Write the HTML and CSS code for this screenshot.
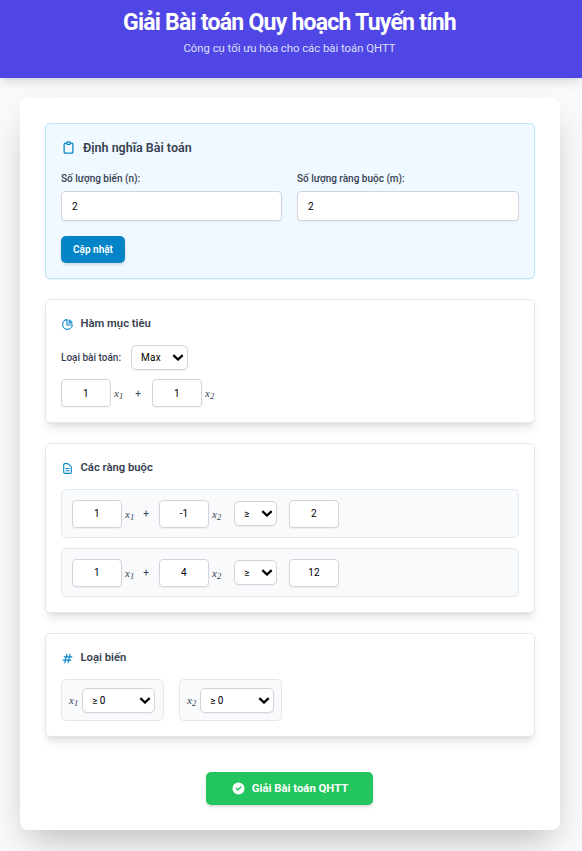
FILE: index.html
```html
<!DOCTYPE html>
<html lang="vi">
<head>
<meta charset="utf-8">
<title>Giải Bài toán Quy hoạch Tuyến tính</title>
<link rel="stylesheet" href="styles.css">
</head>
<body>
<svg width="0" height="0" class="defs">
  <symbol id="chevron" viewBox="0 0 10 6"><path d="M1 1l4 3.7L9 1" fill="none" stroke="#000" stroke-width="2"/></symbol>
</svg>
<header class="header">
  <h1 class="title">Giải Bài toán Quy hoạch Tuyến tính</h1>
  <p class="subtitle">Công cụ tối ưu hóa cho các bài toán QHTT</p>
</header>
<main class="card">
  <section class="panel panel-define">
    <h2 class="heading heading-lg">
      <svg class="icon icon-lg" viewBox="0 0 24 24"><path d="M9 5H7a2 2 0 00-2 2v12a2 2 0 002 2h10a2 2 0 002-2V7a2 2 0 00-2-2h-2M9 5a2 2 0 002 2h2a2 2 0 002-2M9 5a2 2 0 012-2h2a2 2 0 012 2"/></svg>
      <span>Định nghĩa Bài toán</span>
    </h2>
    <div class="fields">
      <label class="field"><span class="label">Số lượng biến (n):</span><input class="input input-wide" value="2"></label>
      <label class="field"><span class="label">Số lượng ràng buộc (m):</span><input class="input input-wide" value="2"></label>
    </div>
    <button class="btn-update">Cập nhật</button>
  </section>

  <section class="panel panel-objective">
    <h2 class="heading">
      <svg class="icon" viewBox="0 0 24 24"><path d="M11 3.055A9.001 9.001 0 1020.945 13H11V3.055z"/><path d="M20.488 9H15V3.512A9.025 9.025 0 0120.488 9z"/></svg>
      <span>Hàm mục tiêu</span>
    </h2>
    <div class="type-row">
      <span class="label">Loại bài toán:</span>
      <span class="select select-type"><select><option>Max</option></select><svg class="chevron"><use href="#chevron"/></svg></span>
    </div>
    <div class="terms">
      <input class="input input-num" value="1"><span class="var">x<sub>1</sub></span><span class="plus">+</span>
      <input class="input input-num" value="1"><span class="var">x<sub>2</sub></span>
    </div>
  </section>

  <section class="panel panel-constraints">
    <h2 class="heading">
      <svg class="icon" viewBox="0 0 24 24"><path d="M9 12h6m-6 4h6m2 5H7a2 2 0 01-2-2V5a2 2 0 012-2h5.586a1 1 0 01.707.293l5.414 5.414a1 1 0 01.293.707V19a2 2 0 01-2 2z"/></svg>
      <span>Các ràng buộc</span>
    </h2>
    <div class="constraint">
      <input class="input input-num" value="1"><span class="var">x<sub>1</sub></span><span class="plus">+</span>
      <input class="input input-num" value="-1"><span class="var">x<sub>2</sub></span>
      <span class="select select-op"><select><option>≥</option></select><svg class="chevron"><use href="#chevron"/></svg></span>
      <input class="input input-num" value="2">
    </div>
    <div class="constraint">
      <input class="input input-num" value="1"><span class="var">x<sub>1</sub></span><span class="plus">+</span>
      <input class="input input-num" value="4"><span class="var">x<sub>2</sub></span>
      <span class="select select-op"><select><option>≥</option></select><svg class="chevron"><use href="#chevron"/></svg></span>
      <input class="input input-num" value="12">
    </div>
  </section>

  <section class="panel panel-vars">
    <h2 class="heading">
      <svg class="icon" viewBox="0 0 24 24"><path d="M7 20l4-16m2 16l4-16M6 9h14M4 15h14"/></svg>
      <span>Loại biến</span>
    </h2>
    <div class="vars">
      <div class="var-box"><span class="var">x<sub>1</sub></span><span class="select select-var"><select><option>≥ 0</option></select><svg class="chevron"><use href="#chevron"/></svg></span></div>
      <div class="var-box"><span class="var">x<sub>2</sub></span><span class="select select-var"><select><option>≥ 0</option></select><svg class="chevron"><use href="#chevron"/></svg></span></div>
    </div>
  </section>

  <button class="btn-solve">
    <svg class="check" viewBox="0 0 20 20"><path fill-rule="evenodd" d="M10 18a8 8 0 100-16 8 8 0 000 16zm3.707-9.293a1 1 0 00-1.414-1.414L9 10.586 7.707 9.293a1 1 0 00-1.414 1.414l2 2a1 1 0 001.414 0l4-4z" clip-rule="evenodd"/></svg>
    <span>Giải Bài toán QHTT</span>
  </button>
</main>
</body>
</html>
```
FILE: styles.css
```css
* { box-sizing: border-box; }
html, body { height: 851px; overflow: hidden; }
body {
  margin: 0;
  background: #f9fafb;
  color: #374151;
  font-family: Roboto, "Liberation Sans", sans-serif;
  font-size: 10px;
}
.defs { position: absolute; }
h1, h2, p { margin: 0; }
input, select, button { font-family: inherit; font-size: 10px; margin: 0; }

.header {
  height: 78px;
  padding: 7px 3px 0 0;
  background: #4f46e5;
  color: #fff;
  text-align: center;
  box-shadow: 0 7px 10px -2px rgba(0,0,0,.1), 0 3px 4px -3px rgba(0,0,0,.1);
}
.title { font-size: 23px; line-height: 32px; font-weight: 700; letter-spacing: -0.76px; }
.subtitle { margin-top: 2px; font-size: 11.3px; line-height: 16px; color: #e0e7ff; opacity: .95; }

.card {
  display: flex;
  flex-direction: column;
  gap: 20px;
  width: 540px;
  height: 732px;
  margin: 20px 0 0 20px;
  padding: 25px;
  background: #fff;
  border-radius: 8px;
  box-shadow: 0 17px 34px -8px rgba(0,0,0,.25);
}
.panel {
  flex: none;
  padding: 15px;
  border: 1px solid #e5e7eb;
  border-radius: 5px;
  background: #fff;
  box-shadow: 0 7px 10px -2px rgba(0,0,0,.1), 0 3px 4px -3px rgba(0,0,0,.1);
}
.panel-define { height: 156px; background: #f0f9ff; border-color: #bae6fd; box-shadow: 0 1px 1px rgba(0,0,0,.05); }
.panel-objective { height: 124px; }
.panel-constraints { height: 170px; }
.panel-vars { height: 104px; }

.heading { display: flex; align-items: center; gap: 6.5px; height: 17px; font-size: 11.25px; font-weight: 600; }
.heading span { line-height: 15px; }
.heading .icon { margin-top: 1px; }
.heading-lg { gap: 7px; font-size: 12.5px; }
.heading-lg .icon { margin-top: 0; }
.icon { width: 13px; height: 13px; fill: none; stroke: #0284c7; stroke-width: 2; stroke-linecap: round; stroke-linejoin: round; }
.icon-lg { width: 15px; height: 15px; }

.label { font-weight: 500; font-size: 10px; line-height: 14px; }
.fields { display: grid; grid-template-columns: 221px 222px; gap: 15px; margin-top: 16px; }
.field { display: flex; flex-direction: column; gap: 5px; }
.input {
  border: 1px solid #d1d5db;
  border-radius: 4px;
  background: #fff;
  color: #000;
  letter-spacing: .15px;
  box-shadow: 0 1px 1px rgba(0,0,0,.05);
}
.input-wide { width: 100%; height: 30px; padding: 0 10px; }
.input-num { width: 50px; height: 28px; padding: 0; text-align: center; }
.btn-update {
  display: block;
  width: 64px;
  height: 27px;
  margin-top: 15px;
  padding: 0;
  border: 0;
  border-radius: 5px;
  background: #0284c7;
  color: #fff;
  font-weight: 600;
  box-shadow: 0 2px 3px rgba(0,0,0,.12);
}

.select { display: inline-grid; align-items: center; }
.select select {
  grid-area: 1 / 1;
  width: 100%;
  height: 100%;
  padding: 0 9px;
  appearance: none;
  border: 1px solid #d1d5db;
  border-radius: 5px;
  background: #fff;
  color: #000;
  box-shadow: 0 1px 1px rgba(0,0,0,.05);
}
.chevron { grid-area: 1 / 1; justify-self: end; width: 12px; height: 7px; margin-right: 4px; pointer-events: none; }
.select-type { width: 57px; height: 25px; }
.select-type select { letter-spacing: .25px; }
.select-op { width: 43px; height: 25px; margin: 0 12px 0 9px; }
.select-var { width: 73px; height: 25px; }
.var-box + .var-box .select-var { width: 74px; }

.type-row { display: flex; align-items: center; gap: 10px; margin-top: 13px; }
.terms { display: flex; align-items: center; margin-top: 9px; }
.var { width: 13px; margin-left: 3px; font-family: "Liberation Serif", serif; font-style: italic; font-size: 11px; line-height: 14px; white-space: nowrap; }
.var sub { font-size: 8.5px; line-height: 0; vertical-align: -2px; }
.plus { width: 22px; margin-right: 3px; text-align: center; }
.constraint .plus { width: 16px; margin-right: 5px; }
.constraint {
  display: flex;
  align-items: center;
  height: 49px;
  margin-top: 10px;
  padding: 0 10px;
  border: 1px solid #e2e8f0;
  border-radius: 5px;
  background: #f8fafc;
}
.heading + .constraint { margin-top: 13px; }
.vars { display: flex; gap: 15px; margin-top: 13px; }
.var-box {
  display: flex;
  align-items: center;
  width: 103px;
  height: 42px;
  padding: 0 4px;
  border: 1px solid #e2e8f0;
  border-radius: 5px;
  background: #f8fafc;
}

.btn-solve {
  display: flex;
  align-items: center;
  justify-content: center;
  gap: 6px;
  flex: none;
  align-self: center;
  width: 167px;
  height: 33px;
  margin: 15px 1px 0 0;
  padding: 0;
  border: 0;
  border-radius: 5px;
  background: #22c55e;
  color: #fff;
  font-size: 11.3px;
  font-weight: 700;
  box-shadow: 0 2px 3px rgba(0,0,0,.15);
}
.btn-solve span { padding-bottom: 1px; }
.check { width: 15px; height: 15px; fill: #fff; }
```
